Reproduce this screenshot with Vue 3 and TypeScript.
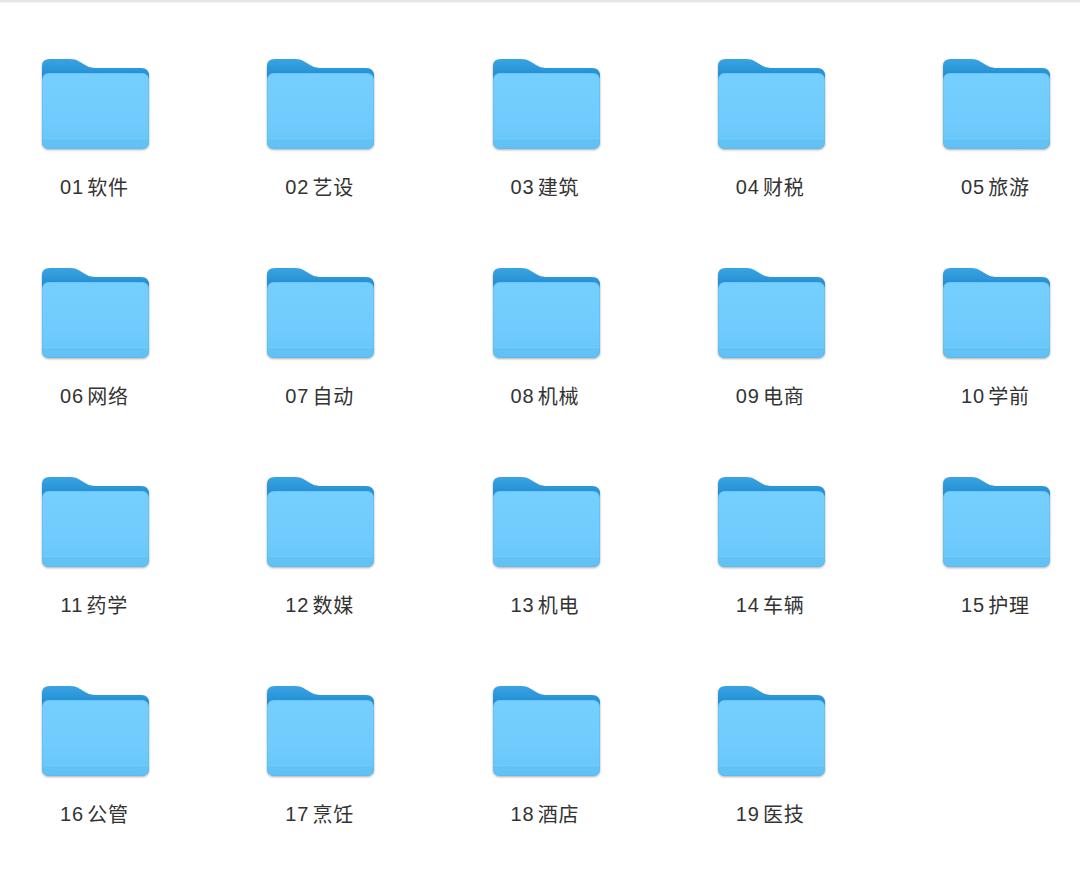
<script setup lang="ts">
const folders: string[] = [
  "01软件", "02艺设", "03建筑", "04财税", "05旅游",
  "06网络", "07自动", "08机械", "09电商", "10学前",
  "11药学", "12数媒", "13机电", "14车辆", "15护理",
  "16公管", "17烹饪", "18酒店", "19医技",
];

const items = folders.map((name) => ({
  name,
  num: name.slice(0, 2),
  title: name.slice(2),
}));
</script>

<template>
  <div class="page">
    <div class="top-line"></div>
    <div class="grid">
      <div class="item" v-for="(item, i) in items" :key="item.name">
        <svg class="folder" width="107" height="96" viewBox="0 0 107 96">
          <defs>
            <linearGradient :id="'back' + i" x1="0" y1="0" x2="0" y2="1">
              <stop offset="0" stop-color="#3aa4e2" />
              <stop offset="1" stop-color="#1480c9" />
            </linearGradient>
            <linearGradient :id="'front' + i" x1="0" y1="0" x2="0" y2="1">
              <stop offset="0" stop-color="#75cfff" />
              <stop offset="0.6" stop-color="#70ccfc" />
              <stop offset="1" stop-color="#66c5f7" />
            </linearGradient>
          </defs>
          <path
            d="M0 10 Q0 3 8 3 H28 Q34 3 38 6 L43 9 Q47 12 52 12 H99 Q107 12 107 20 V30 H0 Z"
            :fill="'url(#back' + i + ')'"
          />
          <rect x="0" y="17" width="107" height="76" rx="7" :fill="'url(#front' + i + ')'" />
          <path d="M0 82 H107 V86 Q107 93 100 93 H7 Q0 93 0 86 Z" fill="#56b7ee" opacity="0.3" />
          <rect x="0" y="82" width="107" height="1" fill="#86d5fb" opacity="0.5" />
          <path
            d="M0.5 24 Q0.5 17.5 7 17.5 H100 Q106.5 17.5 106.5 24 V86 Q106.5 92.5 100 92.5 H7 Q0.5 92.5 0.5 86 Z"
            fill="none"
            stroke="#58b6ec"
            stroke-opacity="0.45"
          />
        </svg>
        <div class="label">
          <span class="num">{{ item.num }}</span>
          <span class="title">{{ item.title }}</span>
        </div>
      </div>
    </div>
  </div>
</template>

<style scoped>
.page {
  width: 1080px;
  height: 880px;
  background: #fff;
  overflow: hidden;
}

.top-line {
  height: 2px;
  background: #e6e6e6;
  box-shadow: 0 1px 2px #f0f0f0;
}

.grid {
  display: grid;
  grid-template-columns: repeat(5, 107px);
  column-gap: 118.25px;
  grid-auto-rows: 209px;
  padding: 54px 0 0 42px;
}

.item {
  display: flex;
  flex-direction: column;
  align-items: center;
}

.folder {
  display: block;
  flex: none;
  filter: drop-shadow(0 1px 1px rgba(0, 0, 0, 0.32));
}

.label {
  display: flex;
  gap: 3px;
  margin-top: 20px;
  padding-right: 2px;
  font-size: 20px;
  line-height: 30px;
  color: #333;
  white-space: nowrap;
}

.num {
  font-family: "Liberation Sans", sans-serif;
  letter-spacing: 1px;
}

.title {
  font-family: "Noto Sans CJK SC", sans-serif;
  letter-spacing: 1px;
}
</style>

<style>
html,
body {
  margin: 0;
  background: #fff;
}
</style>
